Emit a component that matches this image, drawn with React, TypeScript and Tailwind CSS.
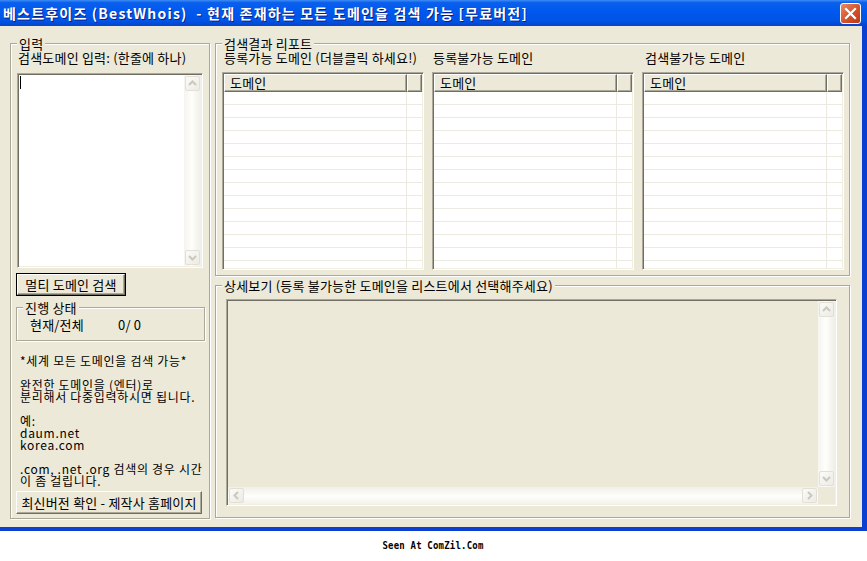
import React from "react";

const sunken =
  "border border-t-[#ACA899] border-l-[#ACA899] border-r-white border-b-white p-px shadow-[inset_1px_1px_0_#716F64,inset_-1px_-1px_0_#F1EFE2]";
const raised =
  "border border-t-white border-l-white border-r-[#716F64] border-b-[#716F64] shadow-[inset_-1px_-1px_0_#ACA899]";

const GroupBox = ({
  title,
  className,
  children,
}: {
  title: string;
  className?: string;
  children?: React.ReactNode;
}) => (
  <div
    className={`relative border border-[#ACA899] shadow-[inset_1px_1px_0_#fff,1px_1px_0_#fff] ${className ?? ""}`}
  >
    <span className="absolute left-[6px] top-[-7px] bg-[#ECE9D8] px-[2px] leading-[13px] whitespace-pre">
      {title}
    </span>
    {children}
  </div>
);

const Button = ({
  children,
  isDefault,
  className,
}: {
  children: React.ReactNode;
  isDefault?: boolean;
  className?: string;
}) => (
  <div
    className={`bg-[#ECE9D8] ${isDefault ? "border border-black" : ""} ${className ?? ""}`}
  >
    <div className={`h-full ${raised} flex items-center justify-center whitespace-pre`}>
      {children}
    </div>
  </div>
);

const arrowPaths = {
  up: "M3 8 L6.5 4.5 L10 8",
  down: "M3 5 L6.5 8.5 L10 5",
  left: "M8 3 L4.5 6.5 L8 10",
  right: "M5 3 L8.5 6.5 L5 10",
};

const Arrow = ({ dir }: { dir: keyof typeof arrowPaths }) => (
  <div className="w-[15px] h-[15px] m-px shrink-0 rounded-[2px] border border-[#E2E0D6] bg-[linear-gradient(to_bottom_right,#FBFBF8,#ECEBE4)] flex items-center justify-center">
    <svg width="13" height="13" viewBox="0 0 13 13">
      <path d={arrowPaths[dir]} fill="none" stroke="#CBC9BC" strokeWidth="2" />
    </svg>
  </div>
);

const VScroll = ({ className }: { className?: string }) => (
  <div
    className={`w-[17px] flex flex-col justify-between bg-[linear-gradient(to_right,#F5F4EF,#FEFEFB_45%,#EFEEE7)] ${className ?? ""}`}
  >
    <Arrow dir="up" />
    <Arrow dir="down" />
  </div>
);

const HScroll = () => (
  <div className="flex-1 h-[17px] flex justify-between bg-[linear-gradient(to_bottom,#F0EFE8,#FEFEFB_55%,#F3F2EC)]">
    <Arrow dir="left" />
    <Arrow dir="right" />
  </div>
);

const ListView = () => (
  <div className={`w-[202px] h-[198px] bg-white overflow-hidden flex flex-col ${sunken}`}>
    <div className="flex h-[18px] shrink-0 bg-[#ECE9D8]">
      <div className={`w-[183px] pl-[5px] leading-[15px] ${raised}`}>도메인</div>
      <div className={`flex-1 ${raised}`} />
    </div>
    {Array.from({ length: 14 }).map((_, i) => (
      <div key={i} className="flex h-[13px] shrink-0 border-b border-[#ECEAE0]">
        <div className="w-[183px] border-r border-[#ECEAE0]" />
        <div className="flex-1" />
      </div>
    ))}
  </div>
);

const notes = [
  "*세계 모든 도메인을 검색 가능*",
  "",
  "완전한 도메인을 (엔터)로",
  "분리해서 다중입력하시면 됩니다.",
  "",
  "예:",
  "daum.net",
  "korea.com",
  "",
  ".com, .net .org 검색의 경우 시간",
  "이 좀 걸립니다.",
];

export default function App() {
  return (
    <div className="w-[867px] h-[561px] bg-white overflow-hidden font-['Noto_Sans_CJK_KR',sans-serif] text-[13px] leading-[13px] tracking-[0.2px] text-black">
      <div className="h-[531px] flex flex-col">
        {/* title bar */}
        <div className="h-[26px] shrink-0 flex items-center justify-between pl-[3px] pr-[6px] bg-[linear-gradient(to_bottom,#3D8CF5_0%,#0A60EC_10%,#0058EE_45%,#0054E6_80%,#0843C9_100%)]">
          <span className="text-white font-bold text-[14px] leading-[16px] tracking-[1.2px] whitespace-pre [text-shadow:1px_1px_0_#0A1E8A]">
            베스트후이즈 (BestWhois)  - 현재 존재하는 모든 도메인을 검색 가능 [무료버전]
          </span>
          <div className="w-[21px] h-[21px] rounded-[3px] border border-white bg-[linear-gradient(to_bottom_right,#E98A66,#D2522B_55%,#B83A17)] flex items-center justify-center">
            <svg width="13" height="13" viewBox="0 0 13 13">
              <path d="M2 2 L11 11 M11 2 L2 11" stroke="#fff" strokeWidth="2.2" strokeLinecap="square" />
            </svg>
          </div>
        </div>

        {/* client area */}
        <div className="flex-1 flex gap-[5px] bg-[#ECE9D8] border-r-[5px] border-b-[4px] border-[#0A3FD2] pl-[10px] pt-[17px]">
          {/* 입력 */}
          <GroupBox title="입력" className="w-[200px] h-[476px] shrink-0">
            <div className="flex flex-col">
              <div className="pl-[7px] pt-[7px] whitespace-pre">검색도메인 입력: (한줄에 하나)</div>
              <div className={`ml-[6px] mt-[9px] w-[186px] h-[195px] bg-white flex ${sunken}`}>
                <div className="flex-1 pl-[1px] pt-[1px]">
                  <div className="w-px h-[13px] bg-black" />
                </div>
                <VScroll />
              </div>
              <Button isDefault className="ml-[5px] mt-[5px] w-[110px] h-[23px]">
                멀티 도메인 검색
              </Button>
              <GroupBox title="진행 상태" className="ml-[5px] mt-[11px] w-[189px] h-[34px]">
                <div className="flex pl-[13px] pt-[10px]">
                  <span className="w-[88px]">현재/전체</span>
                  <span className="whitespace-pre">0/ 0</span>
                </div>
              </GroupBox>
              <div className="pl-[9px] mt-[14px] text-[12px] leading-[12px] tracking-[0.7px]">
                {notes.map((line, i) => (
                  <div key={i} className="h-[12px] whitespace-pre">
                    {line}
                  </div>
                ))}
              </div>
              <Button className="ml-[5px] mt-[4px] w-[186px] h-[23px]">
                최신버전 확인 - 제작사 홈페이지
              </Button>
            </div>
          </GroupBox>

          <div className="w-[635px] flex flex-col gap-[9px]">
            {/* 검색결과 리포트 */}
            <GroupBox title="검색결과 리포트" className="h-[233px]">
              <div className="flex gap-[8px] pl-[6px] pt-[7px]">
                <div className="flex flex-col gap-[8px]">
                  <div className="pl-[2px] whitespace-pre">등록가능 도메인 (더블클릭 하세요!)</div>
                  <ListView />
                </div>
                <div className="flex flex-col gap-[8px]">
                  <div className="pl-[1px] whitespace-pre">등록불가능 도메인</div>
                  <ListView />
                </div>
                <div className="flex flex-col gap-[8px]">
                  <div className="pl-[3px] whitespace-pre">검색불가능 도메인</div>
                  <ListView />
                </div>
              </div>
            </GroupBox>

            {/* 상세보기 */}
            <GroupBox
              title="상세보기 (등록 불가능한 도메인을 리스트에서 선택해주세요)"
              className="h-[233px]"
            >
              <div className="pl-[10px] pt-[13px]">
                <div className={`w-[611px] h-[207px] bg-[#ECE9D8] flex flex-col ${sunken}`}>
                  <div className="flex-1 flex">
                    <div className="flex-1" />
                    <VScroll />
                  </div>
                  <div className="flex">
                    <HScroll />
                    <div className="w-[17px] h-[17px]" />
                  </div>
                </div>
              </div>
            </GroupBox>
          </div>
        </div>
      </div>

      <div className="flex justify-center pt-[9px] pr-[1px]">
        <span className="inline-block font-['DejaVu_Sans_Mono',monospace] font-bold text-[9px] leading-[10px] scale-y-125">
          Seen At ComZil.Com
        </span>
      </div>
    </div>
  );
}
